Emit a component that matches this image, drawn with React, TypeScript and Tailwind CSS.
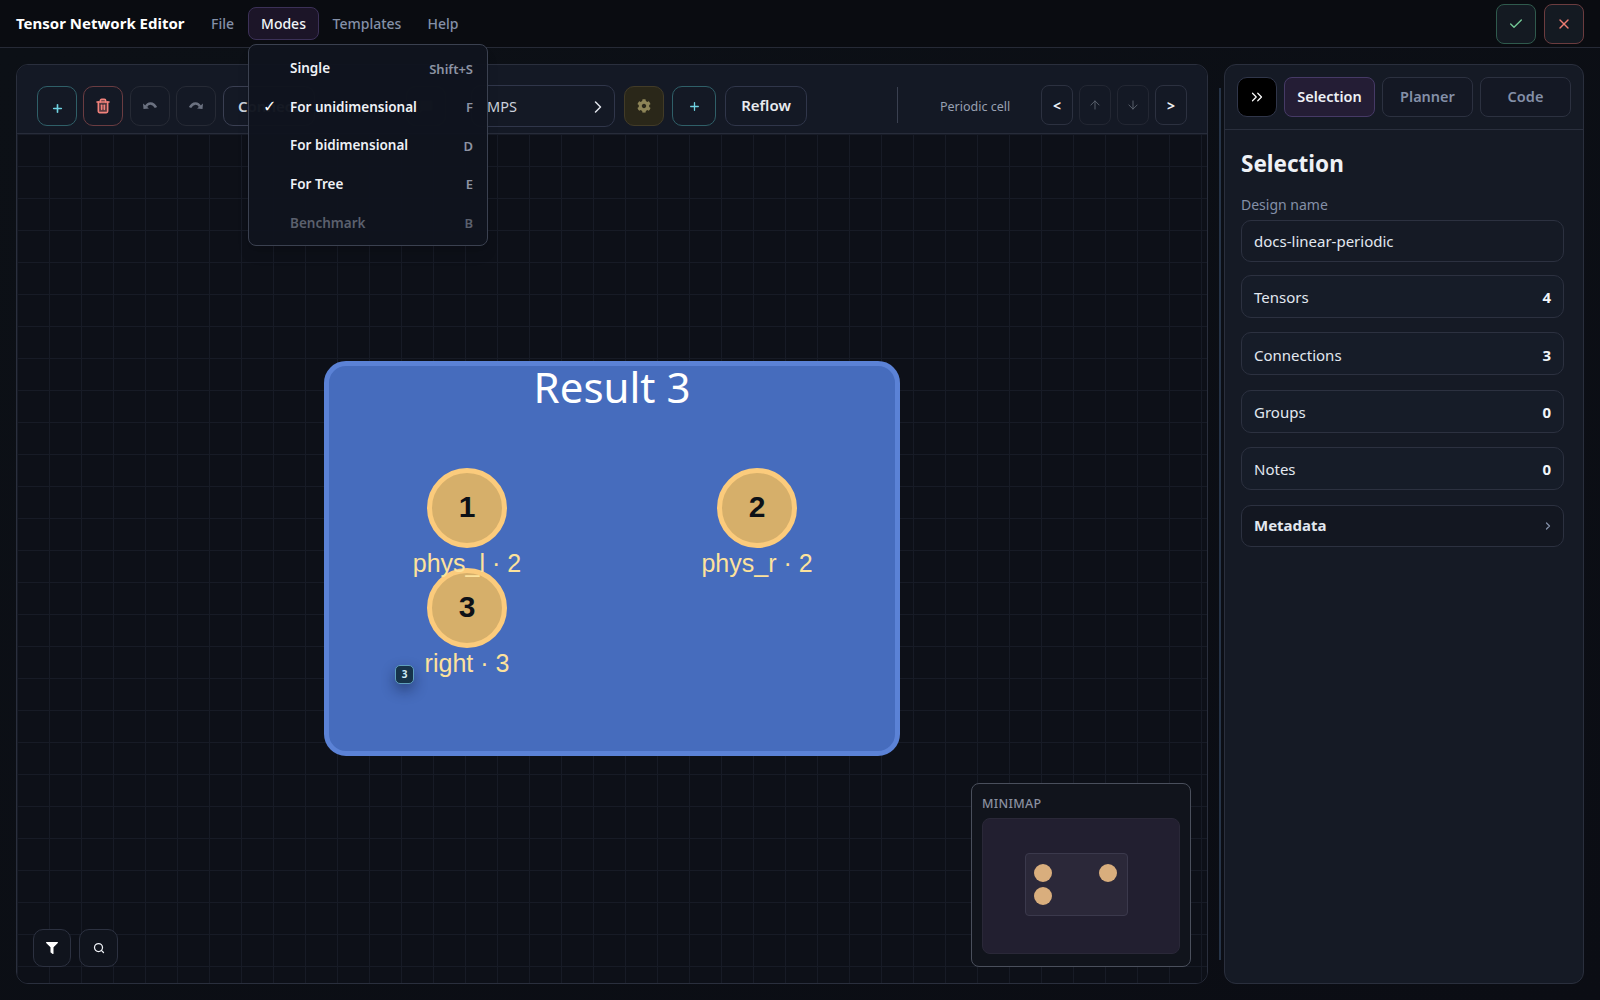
import { ArrowDown, ArrowUp, Check, ChevronRight, ChevronsRight, MessageSquare, Plus, Search, Trash2, X } from "lucide-react";
import { FaCog, FaFilter } from "react-icons/fa";

const sideRows = [
  { label: "Tensors", value: "4" },
  { label: "Connections", value: "3" },
  { label: "Groups", value: "0" },
  { label: "Notes", value: "0" },
];

const modeItems = [
  { label: "Single", key: "Shift+S" },
  { label: "For unidimensional", key: "F", checked: true },
  { label: "For bidimensional", key: "D" },
  { label: "For Tree", key: "E" },
  { label: "Benchmark", key: "B", disabled: true },
];

function UndoIcon({ flip }: { flip?: boolean }) {
  return (
    <svg width="16" height="16" viewBox="0 0 16 16" className={flip ? "-scale-x-100" : ""} fill="none">
      <path d="M4 8.5C6 4.5 11 4 14 9.5" stroke="currentColor" strokeWidth="2.6" />
      <path d="M1 5.5L1.5 11L7 10.5Z" fill="currentColor" />
    </svg>
  );
}

function Node({ n, label, className }: { n: string; label: string; className: string }) {
  return (
    <div className={`absolute w-[80px] ${className}`}>
      <div className="flex h-[80px] w-[80px] items-center justify-center rounded-full border-[5px] border-[#fbcb7c] bg-[#d6af6a] pb-1 font-['Liberation_Sans',sans-serif] text-[30px] font-bold text-[#0d1117]">
        {n}
      </div>
      <div className="absolute left-1/2 top-[79px] z-10 -translate-x-1/2 whitespace-nowrap font-['Liberation_Sans',sans-serif] text-[25px] leading-[32px] text-[#fde29c]">
        {label}
      </div>
    </div>
  );
}

export default function App() {
  return (
    <div className="flex h-screen w-full flex-col overflow-hidden bg-[#0b0d12] font-['Noto_Sans',sans-serif] text-[#e2e8f0]">
      {/* Menu bar */}
      <header className="relative z-30 flex h-[48px] shrink-0 items-center border-b border-[#262a36] bg-[#0a0c11] pl-4 pr-4">
        <span className="w-[183px] text-[15px] font-bold text-white">Tensor Network Editor</span>
        <nav className="flex items-center gap-[2px] text-[14px] font-medium text-[#8490a8]">
          <button className="h-[33px] w-[47px] rounded-lg border border-transparent">File</button>
          <div className="relative">
            <button className="h-[33px] w-[71px] rounded-lg border border-[#3c3158] bg-[#1c1528] text-[#f1f5f9]">Modes</button>
            <div className="absolute left-0 top-[37px] h-[202px] w-[240px] rounded-lg border border-[#3b4150] bg-[#10141e]/97 pt-[4px] shadow-lg">
              {modeItems.map((item) => (
                <div key={item.label} className="relative flex h-[38.6px] items-center justify-between pl-[41px] pr-[14px]">
                  {item.checked && <span className="absolute left-[14px] font-['DejaVu_Sans',sans-serif] text-[16px] text-white">✓</span>}
                  <span className={`text-[13.5px] font-semibold ${item.disabled ? "text-[#5b606d]" : "text-[#eef1f6]"}`}>{item.label}</span>
                  <span className={`pt-[2px] text-[13px] font-semibold ${item.disabled ? "text-[#5b606d]" : "text-[#8d93a3]"}`}>{item.key}</span>
                </div>
              ))}
            </div>
          </div>
          <button className="h-[33px] w-[92px] rounded-lg border border-transparent">Templates</button>
          <button className="h-[33px] w-[56px] rounded-lg border border-transparent">Help</button>
        </nav>
        <div className="ml-auto flex items-center gap-2">
          <button className="flex h-10 w-10 items-center justify-center rounded-lg border border-[#2f5a4d] bg-[#141a22] text-[#74c997]">
            <Check size={16} />
          </button>
          <button className="flex h-10 w-10 items-center justify-center rounded-lg border border-[#6b3c3f] bg-[#141a22] text-[#ef7c72]">
            <X size={16} />
          </button>
        </div>
      </header>

      <main className="relative flex min-h-0 flex-1 gap-4 bg-gradient-to-br from-[#0c1016] to-[#0b0d14] p-4">
        {/* Canvas panel */}
        <section className="relative flex min-w-0 flex-1 flex-col overflow-hidden rounded-xl border border-[#2a2f3d] bg-[#0c0f17]">
          <div className="flex h-[69px] shrink-0 items-start border-b border-[#272c3a] bg-[#141925] pl-5 pr-5 pt-5">
            <div className="flex items-center">
              <button className="flex h-10 w-10 items-center justify-center rounded-[10px] border border-[#2f5f68] pt-1 text-[#6fd3e3]">
                <Plus size={13} strokeWidth={3} />
              </button>
              <button className="ml-[6px] flex h-10 w-10 items-center justify-center rounded-[10px] border border-[#6a3c41] text-[#f2827c]">
                <Trash2 size={16} strokeWidth={2.4} fill="currentColor" fillOpacity={0.3} />
              </button>
              <button className="ml-[7px] flex h-10 w-10 items-center justify-center rounded-[10px] border border-[#262a35] text-[#6b7180]">
                <UndoIcon />
              </button>
              <button className="ml-[6px] flex h-10 w-10 items-center justify-center rounded-[10px] border border-[#262a35] text-[#6b7180]">
                <UndoIcon flip />
              </button>
              <button className="ml-[7px] h-10 w-[92px] rounded-[10px] border border-[#3a3f52] px-[14px] text-left text-[15px] font-semibold text-[#cbd1dc]">Connect</button>
              <button className="ml-[91px] flex h-10 w-10 items-center justify-center rounded-[10px] border border-[#262a35] text-[#3a3f4a]">
                <MessageSquare size={14} fill="currentColor" />
              </button>
              <div className="ml-[25px] flex h-[42px] w-[144px] items-center justify-between rounded-[10px] border border-[#30364a] pl-[15px] pr-[6px] pt-[1px] text-[14.5px] text-[#cbd1dc]">
                <span>MPS</span>
                <ChevronRight size={20} strokeWidth={1.8} className="text-[#dfe3ea]" />
              </div>
              <button className="ml-[9px] flex h-10 w-10 items-center justify-center rounded-[10px] border border-[#423b27] bg-[#2a2719] text-[#8d8457]">
                <FaCog size={14} />
              </button>
              <button className="ml-2 flex h-10 w-11 items-center justify-center rounded-[10px] border border-[#2f5f68] text-[#6fd3e3]">
                <Plus size={13} strokeWidth={2.4} />
              </button>
              <button className="ml-[9px] h-10 w-[82px] rounded-[10px] border border-[#30364a] pb-[2px] text-[15px] font-semibold text-[#e8ebf0]">Reflow</button>
            </div>
            <div className="ml-[90px] mt-[2px] h-[36px] w-px bg-[#3a4050]" />
            <span className="ml-[42px] mt-[13px] w-[72px] whitespace-nowrap text-[12.5px] text-[#98a0b2]">Periodic cell</span>
            <div className="ml-[29px] flex items-center gap-[6px] text-[14px] font-bold">
              <button className="h-10 w-8 rounded-lg border border-[#2c3140] text-[#eef1f6]">&lt;</button>
              <button className="flex h-10 w-8 items-center justify-center rounded-lg border border-[#232733] text-[#5d6470]">
                <ArrowUp size={14} strokeWidth={1.6} />
              </button>
              <button className="flex h-10 w-8 items-center justify-center rounded-lg border border-[#232733] text-[#5d6470]">
                <ArrowDown size={14} strokeWidth={1.6} />
              </button>
              <button className="h-10 w-8 rounded-lg border border-[#2c3140] text-[#eef1f6]">&gt;</button>
            </div>
          </div>

          {/* Free canvas */}
          <div className="relative min-h-0 flex-1 bg-[#0d1018] bg-[linear-gradient(#171b26_1px,transparent_1px),linear-gradient(90deg,#171b26_1px,transparent_1px)] bg-[size:32px_32px]">
            <div className="absolute left-[307px] top-[227px] h-[395px] w-[576px] rounded-[22px] border-[5px] border-[#5b82d6] bg-[#466cbd]">
              <div className="absolute inset-x-0 top-[-9px] text-center text-[42px] leading-[60px] text-white">Result 3</div>
              <Node n="1" label="phys_l · 2" className="left-[98px] top-[102px]" />
              <Node n="2" label="phys_r · 2" className="left-[388px] top-[102px]" />
              <Node n="3" label="right · 3" className="left-[98px] top-[202px]" />
              <div className="absolute left-[66px] top-[299px] flex h-[19px] w-[19px] items-center justify-center rounded-[5px] border border-[#5f9fbd] bg-[#16334a] text-[10px] font-bold text-[#cfeaf5] shadow-[0_6px_14px_rgba(10,20,50,0.45)]">
                3
              </div>
            </div>

            <div className="absolute left-[16px] top-[795px] flex gap-2">
              <button className="flex h-[38px] w-[38px] items-center justify-center rounded-[10px] border border-[#2c3140] bg-[#10141d] text-white">
                <FaFilter size={12} />
              </button>
              <button className="flex h-[38px] w-[39px] items-center justify-center rounded-[10px] border border-[#2c3140] bg-[#10141d] text-[#eef1f6]">
                <Search size={12} strokeWidth={2.5} />
              </button>
            </div>

            <div className="absolute left-[954px] top-[649px] h-[184px] w-[220px] rounded-lg border border-[#4a4f5c] bg-[#11141c] px-[10px]">
              <div className="pb-[5px] pt-[11px] text-[12.5px] font-medium leading-[18px] tracking-[0.3px] text-[#8a90a0]">MINIMAP</div>
              <div className="relative h-[136px] w-[198px] rounded-lg border border-[#2a2838] bg-[#221f30]">
                <div className="absolute left-[42px] top-[34px] h-[63px] w-[103px] rounded border border-[#3b394c] bg-[#2b2839]" />
                <div className="absolute left-[51px] top-[45px] h-[18px] w-[18px] rounded-full bg-[#d9ae7d]" />
                <div className="absolute left-[116px] top-[45px] h-[18px] w-[18px] rounded-full bg-[#d9ae7d]" />
                <div className="absolute left-[51px] top-[68px] h-[18px] w-[18px] rounded-full bg-[#d9ae7d]" />
              </div>
            </div>
          </div>
        </section>

        {/* Resize handle */}
        <div className="absolute bottom-[40px] left-[1219px] top-[40px] w-[2px] bg-[#263448]" />

        {/* Side panel */}
        <aside className="flex w-[360px] shrink-0 flex-col rounded-xl border border-[#2a2f3d] bg-[#151a25]">
          <div className="flex h-[65px] shrink-0 items-start gap-[7px] border-b border-[#2a2f3d] px-3 pt-3">
            <button className="flex h-10 w-10 shrink-0 items-center justify-center rounded-[10px] border border-[#30364a] bg-black text-white">
              <ChevronsRight size={18} strokeWidth={1.6} />
            </button>
            <button className="h-10 w-[91px] rounded-lg border border-[#463a66] bg-[#241d35] text-[14.5px] font-semibold text-[#eef1f6]">Selection</button>
            <button className="h-10 w-[91px] rounded-lg border border-[#2c3140] bg-[#141824] text-[14.5px] font-semibold text-[#8490a8]">Planner</button>
            <button className="h-10 w-[91px] rounded-lg border border-[#2c3140] bg-[#141824] text-[14.5px] font-semibold text-[#8490a8]">Code</button>
          </div>
          <div className="pl-4 pr-[19px] pt-[17px]">
            <h2 className="text-[22.5px] font-bold leading-[34px] text-[#eef1f6]">Selection</h2>
            <div className="mt-[14px] text-[14px] leading-[20px] text-[#8490a8]">Design name</div>
            <div className="mt-[5px] flex h-[42px] items-center rounded-[10px] border border-[#2c3140] px-3 text-[15px] text-[#e2e8f0]">docs-linear-periodic</div>
            <div className="mt-[13px] flex flex-col gap-[14.4px]">
              {sideRows.map((row) => (
                <div key={row.label} className="flex h-[43px] items-center justify-between rounded-[10px] border border-[#2c3140] bg-[#161c28] px-3 pt-[2px] text-[15px]">
                  <span className="text-[#e2e8f0]">{row.label}</span>
                  <span className="font-bold text-[#f1f5f9]">{row.value}</span>
                </div>
              ))}
              <div className="flex h-[42px] items-center justify-between rounded-[10px] border border-[#2c3140] bg-[#131721] px-3 text-[15px] font-bold text-[#e2e8f0]">
                <span>Metadata</span>
                <ChevronRight size={12} strokeWidth={2.5} className="-mr-[3px] text-[#8490a8]" />
              </div>
            </div>
          </div>
        </aside>
      </main>
    </div>
  );
}
